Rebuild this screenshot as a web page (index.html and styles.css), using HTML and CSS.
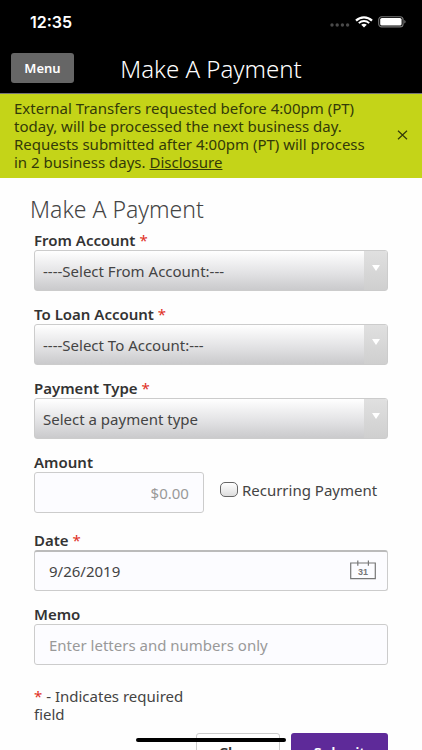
FILE: index.html
```html
<!doctype html>
<html lang="en">
  <head>
    <title>Make A Payment</title>
    <meta charset="UTF-8">
    <meta name="viewport" content="width=device-width, initial-scale=1">
    <link rel="stylesheet" href="styles.css">
  </head>
  <body>
    <div class="status-bar">
      <span class="time">12:35</span>
      <div class="status-icons">
        <svg class="signal" width="20" height="12" viewBox="0 0 20 12" fill="#4a4a4a" aria-hidden="true">
          <circle cx="2" cy="9" r="1.7"/>
          <circle cx="7.2" cy="9" r="1.7"/>
          <circle cx="12.4" cy="9" r="1.7"/>
          <circle cx="17.6" cy="9" r="1.7"/>
        </svg>
        <svg width="18" height="12" viewBox="0 0 18 12" fill="none" stroke="#fff" aria-hidden="true">
          <path d="M1 4.6C5.5.2 12.5.2 17 4.6" stroke-width="2.2"/>
          <path d="M3.8 7.1c3-2.8 7.4-2.8 10.4 0" stroke-width="1.9"/>
          <path d="M6.2 8.8c1.6-1.4 4-1.4 5.6 0L9 11.4z" fill="#fff" stroke="none"/>
        </svg>
        <svg width="28" height="12" viewBox="0 0 28 12" aria-hidden="true">
          <rect x=".7" y=".7" width="24.4" height="10.2" rx="3" fill="none" stroke="#777" stroke-width="1.1"/>
          <rect x="2.2" y="2" width="21.4" height="7.6" rx="1.6" fill="#fff"/>
          <path d="M26.3 4v3.6c.8-.3 1.3-1 1.3-1.8s-.5-1.5-1.3-1.8z" fill="#777"/>
        </svg>
      </div>
    </div>

    <header class="header">
      <button type="button" class="menu-button">Menu</button>
      <h1>Make A Payment</h1>
    </header>

    <div class="notice">
      <p>External Transfers requested before 4:00pm (PT) today, will be processed the next business day. Requests submitted after 4:00pm (PT) will process in 2 business days. <a href="#disclosure">Disclosure</a></p>
      <button type="button" class="notice-close" aria-label="Dismiss">
        <svg width="11" height="10" viewBox="0 0 11 10" fill="none" stroke="#333a08" stroke-width="1.2">
          <path d="M1 .8l9 8.4M10 .8L1 9.2"/>
        </svg>
      </button>
    </div>

    <main class="content">
      <h2>Make A Payment</h2>
      <form class="payment-form" action="" method="POST">
        <div class="field">
          <label for="from">From Account <span class="required">*</span></label>
          <div class="select">
            <select id="from" name="from">
              <option>----Select From Account:---</option>
            </select>
          </div>
        </div>
        <div class="field">
          <label for="to">To Loan Account <span class="required">*</span></label>
          <div class="select">
            <select id="to" name="to">
              <option>----Select To Account:---</option>
            </select>
          </div>
        </div>
        <div class="field">
          <label for="type">Payment Type <span class="required">*</span></label>
          <div class="select">
            <select id="type" name="type">
              <option>Select a payment type</option>
            </select>
          </div>
        </div>
        <div class="amount-row">
          <div class="field">
            <label for="amount">Amount</label>
            <input type="text" id="amount" name="amount" class="amount" placeholder="$0.00">
          </div>
          <label class="recurring"><input type="checkbox" name="recurring">Recurring Payment</label>
        </div>
        <div class="field">
          <label for="date">Date <span class="required">*</span></label>
          <div class="date">
            <input type="text" id="date" name="date" value="9/26/2019">
            <button type="button" class="calendar" aria-label="Choose a date">
              <svg width="26" height="20" viewBox="0 0 26 20" fill="none" stroke="#777" stroke-width="1.2">
                <path d="M.7 3h24.6v15.6H.7zM7.8.4v5.4M18.4.4v5.4"/>
                <text x="13" y="14.6" text-anchor="middle" class="calendar-day">31</text>
              </svg>
            </button>
          </div>
        </div>
        <div class="field">
          <label for="memo">Memo</label>
          <input type="text" id="memo" name="memo" placeholder="Enter letters and numbers only">
        </div>
        <p class="legend"><span class="required">*</span> - Indicates required field</p>
        <div class="actions">
          <button type="button" class="close">Close</button>
          <button type="submit" class="submit">Submit</button>
        </div>
      </form>
    </main>

    <div class="home-indicator"></div>
  </body>
</html>
```

FILE: styles.css
```css
* {
  box-sizing: border-box;
}

body {
  display: flex;
  flex-direction: column;
  height: 100vh;
  margin: 0;
  background: #fefefe;
  color: #444;
  font-family: "Noto Sans", "Open Sans", sans-serif;
  font-size: 15px;
  line-height: 18px;
}

h1, h2, p {
  margin: 0;
}

h1, h2 {
  font-weight: 300;
}

button, input, select {
  margin: 0;
  font: inherit;
}

button {
  cursor: pointer;
}

.status-bar {
  display: flex;
  flex: none;
  align-items: center;
  justify-content: space-between;
  height: 43px;
  padding: 0 16px 0 30px;
  background: #000;
  color: #fff;
}

.time {
  font-family: Inter, sans-serif;
  font-size: 16px;
  font-weight: 600;
}

.status-icons {
  display: flex;
  align-items: center;
  gap: 5px;
}

.header {
  display: grid;
  flex: none;
  grid-template-columns: 1fr auto 1fr;
  align-items: center;
  height: 51px;
  padding: 0 11px;
  border-bottom: 1px solid #777;
  background: #000;
  color: #fff;
}

.header h1 {
  padding-top: 2px;
  font-size: 24px;
  line-height: 30px;
}

.menu-button {
  justify-self: start;
  width: 63px;
  height: 30px;
  padding: 0;
  border: 0;
  border-radius: 3px;
  background: #666;
  color: #fff;
  font-size: 13px;
  font-weight: 600;
}

.notice {
  display: flex;
  flex: none;
  align-items: center;
  gap: 16px;
  padding: 5px 12px 7px 14px;
  background: #c4d418;
  color: #333a08;
}

.notice p {
  flex: 1;
}

.notice a {
  color: inherit;
}

.notice-close {
  display: flex;
  padding: 2px;
  border: 0;
  background: none;
}

.content {
  flex: 1;
  overflow-y: auto;
  padding: 16px 30px 24px;
  scrollbar-width: none;
}

.content h2 {
  font-size: 23px;
  line-height: 30px;
}

.payment-form {
  padding: 7px 4px 0;
}

.field {
  margin-bottom: 14px;
}

.field label {
  display: block;
  margin-bottom: 1px;
  color: #333;
  font-weight: 600;
}

.required {
  color: #e0301e;
  font-weight: 400;
}

.field input, select {
  display: block;
  width: 100%;
  height: 41px;
  border: 1px solid #ccc;
  border-radius: 3px;
  color: #444;
  line-height: 24px;
}

.field input {
  padding: 0 14px;
  background: #fcfcff;
}

.field input::placeholder {
  color: #999;
  opacity: 1;
}

.select {
  position: relative;
}

select {
  appearance: none;
  padding: 0 32px 0 8px;
  background: linear-gradient(#fff, #e3e3e5 55%, #cacacc);
}

/* drop-down arrow, over the right end of the select */
.select::before {
  content: "";
  position: absolute;
  top: 1px;
  right: 1px;
  bottom: 1px;
  width: 23px;
  border-radius: 0 2px 2px 0;
  background: linear-gradient(#e0e0e0, #cfcfcf);
  pointer-events: none;
}

.select::after {
  content: "";
  position: absolute;
  top: 15px;
  right: 8px;
  border: 4px solid transparent;
  border-top: 6px solid #fff;
  border-bottom: 0;
  pointer-events: none;
}

.amount-row {
  display: flex;
  align-items: flex-end;
  gap: 16px;
  margin-bottom: 18px;
}

.amount-row .field {
  flex: 0 0 48%;
  margin: 0;
}

.field .amount {
  text-align: right;
}

.recurring {
  display: flex;
  align-items: center;
  gap: 4px;
  height: 41px;
  padding-bottom: 6px;
  white-space: nowrap;
}

.recurring input {
  appearance: none;
  width: 18px;
  height: 15px;
  border: 1px solid #666;
  border-radius: 5px;
  background: linear-gradient(#fff, #ddd);
}

.date {
  position: relative;
}

.date input {
  border-top: 2px solid #bbb;
}

.calendar {
  position: absolute;
  top: 10px;
  right: 12px;
  display: flex;
  padding: 0;
  border: 0;
  background: none;
}

.calendar-day {
  fill: #777;
  stroke: none;
  font-family: "Liberation Sans", sans-serif;
  font-size: 9px;
  font-weight: bold;
}

.legend {
  max-width: 180px;
  padding-top: 8px;
}

.actions {
  display: flex;
  justify-content: flex-end;
  gap: 11px;
  padding-top: 10px;
}

.actions button {
  height: 40px;
  padding: 0 0 2px;
  border-radius: 3px;
  font-weight: 600;
}

.actions .close {
  width: 84px;
  border: 1px solid #ccc;
  background: #fff;
  color: #333;
}

.actions .submit {
  width: 97px;
  border: 0;
  background: #5e2a99;
  color: #fff;
}

.home-indicator {
  position: fixed;
  bottom: 8px;
  left: 50%;
  width: 150px;
  height: 4px;
  margin-left: -75px;
  border-radius: 2px;
  background: #000;
}
```
